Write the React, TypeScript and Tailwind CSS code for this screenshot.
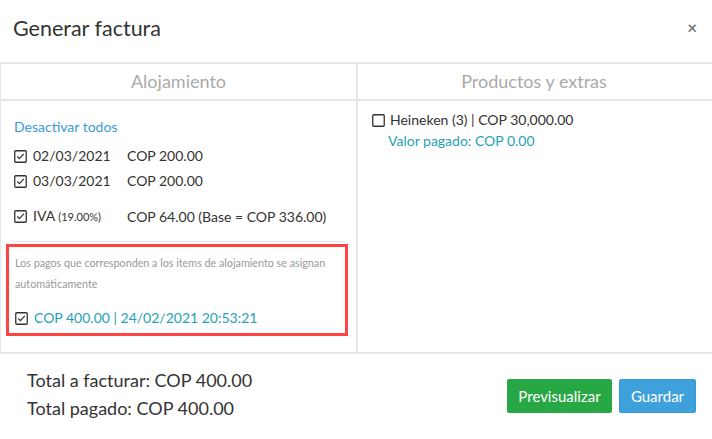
import React from "react";

const CheckBox = ({ checked }: { checked: boolean }) => (
    <svg width="13" height="13" viewBox="0 0 13 13" className="shrink-0">
        <rect x="0.75" y="0.75" width="11.5" height="11.5" rx="1" fill="none" stroke="#333" strokeWidth="1.3" />
        {checked ? (
            <path d="M3.2 6.4 L5.4 8.6 L9.8 3.9" fill="none" stroke="#333" strokeWidth="1.3" />
        ) : null}
    </svg>
);

const App = () => {
    return (
        <main
            className="w-[712px] h-[439px] bg-white text-[#333] overflow-hidden"
            style={{ fontFamily: "Lato, 'Open Sans', sans-serif" }}
        >
            <div className="flex flex-row items-start justify-between pl-[13px] pr-[15px] pt-[14px] h-[62px]">
                <div className="text-[21.5px] leading-[28px] text-[#333]">Generar factura</div>
                <div className="text-[17px] leading-[28px] font-bold text-[#777]">×</div>
            </div>

            <div className="flex flex-row border-t-2 border-l border-[#e4e7ea] w-[714px]">
                <div className="w-[355px] flex flex-col">
                    <div className="h-[37px] flex items-center justify-center text-[18px] text-[#aaa] border-b-2 border-[#e4e7ea]">
                        Alojamiento
                    </div>
                    <div className="pl-[13px] pr-[13px] pt-[16px] pb-[16px] text-[14px] leading-[20px]">
                        <div className="text-[#3a9ad9]">Desactivar todos</div>
                        <div className="flex flex-row items-center gap-[6px] mt-[9px]">
                            <CheckBox checked />
                            <span className="w-[88px]">02/03/2021</span>
                            <span>COP 200.00</span>
                        </div>
                        <div className="flex flex-row items-center gap-[6px] mt-[5px]">
                            <CheckBox checked />
                            <span className="w-[88px]">03/03/2021</span>
                            <span>COP 200.00</span>
                        </div>
                        <div className="flex flex-row items-center gap-[6px] mt-[15px]">
                            <CheckBox checked />
                            <span className="w-[88px]">
                                IVA <span className="text-[11px]">(19.00%)</span>
                            </span>
                            <span>COP 64.00 (Base = COP 336.00)</span>
                        </div>
                        <div className="h-px bg-[#e4e7ea] mt-[14px]" />
                        <div className="ml-[-8px] mr-[-5px] mt-[2px] border-[3px] border-[#ff4343] pl-[6px] pr-[2px] pt-[5px] pb-[5px]">
                            <div className="text-[10.75px] leading-[21px] text-[#999]">
                                Los pagos que corresponden a los items de alojamiento se asignan automáticamente
                            </div>
                            <div className="flex flex-row items-center gap-[6px] mt-[14px] text-[#1fa1b6]">
                                <CheckBox checked />
                                <span>COP 400.00 | 24/02/2021 20:53:21</span>
                            </div>
                        </div>
                    </div>
                </div>
                <div className="flex-1 flex flex-col border-l-2 border-[#e4e7ea]">
                    <div className="h-[37px] flex items-center justify-center text-[18px] text-[#aaa] border-b-2 border-[#e4e7ea]">
                        <span className="pr-[4px]">Productos y extras</span>
                    </div>
                    <div className="pl-[14px] pt-[9px] text-[14px] leading-[20px]">
                        <div className="flex flex-row items-center gap-[5px]">
                            <CheckBox checked={false} />
                            <span>Heineken (3) | COP 30,000.00</span>
                        </div>
                        <div className="mt-[1px] pl-[16px] text-[#1fa1b6]">Valor pagado: COP 0.00</div>
                    </div>
                </div>
            </div>

            <div className="border-t-2 border-[#e4e7ea] flex flex-row justify-between pl-[27px] pr-[16px] pt-[12px]">
                <div className="text-[18px] leading-[28px] text-[#333]">
                    <div>Total a facturar: COP 400.00</div>
                    <div>Total pagado: COP 400.00</div>
                </div>
                <div className="flex flex-row gap-[7px] pt-[13px]">
                    <button className="h-[34px] w-[105px] bg-[#28a745] text-white text-[15px] rounded-[2px]">
                        Previsualizar
                    </button>
                    <button className="h-[34px] w-[77px] bg-[#3fa1dc] border border-[#3a97d0] text-white text-[15px] rounded-[2px]">
                        Guardar
                    </button>
                </div>
            </div>
        </main>
    );
};

export default App;
